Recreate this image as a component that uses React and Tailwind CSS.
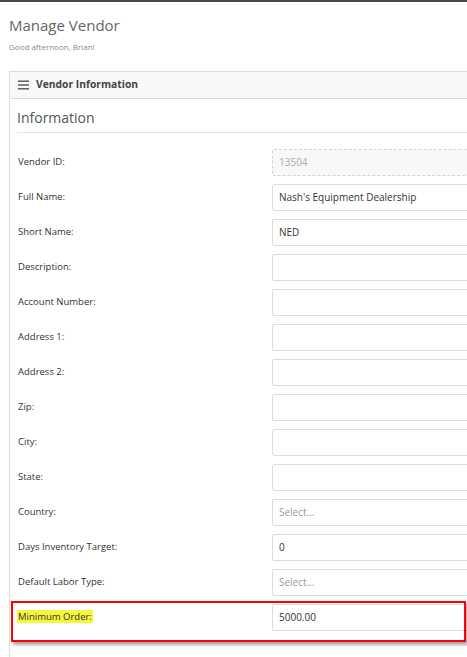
import React from "react";

const fields = [
  { label: "Vendor ID:", value: "13504", locked: true },
  { label: "Full Name:", value: "Nash's Equipment Dealership" },
  { label: "Short Name:", value: "NED" },
  { label: "Description:", value: "" },
  { label: "Account Number:", value: "" },
  { label: "Address 1:", value: "" },
  { label: "Address 2:", value: "" },
  { label: "Zip:", value: "" },
  { label: "City:", value: "" },
  { label: "State:", value: "" },
  { label: "Country:", placeholder: "Select..." },
  { label: "Days Inventory Target:", value: "0" },
  { label: "Default Labor Type:", placeholder: "Select..." },
];

const MenuIcon = () => (
  <svg width="12" height="10" viewBox="0 0 12 10" className="text-[#555]">
    <rect x="0" y="0.5" width="11" height="1.4" fill="currentColor" />
    <rect x="0" y="4.3" width="11" height="1.4" fill="currentColor" />
    <rect x="0" y="8.1" width="11" height="1.4" fill="currentColor" />
  </svg>
);

const Field = ({ value, placeholder, locked }) => {
  if (locked) {
    return (
      <div className="h-[27px] w-[220px] flex items-center px-[6px] rounded-[2px] border border-dashed border-[#d4d4d4] bg-[#f8f8f8] text-[10px] text-[#aaa]">
        {value}
      </div>
    );
  }
  return (
    <div className="h-[27px] w-[220px] flex items-center px-[6px] rounded-[2px] border border-[#dcdcdc] bg-white text-[10px] text-[#333]">
      {placeholder ? <span className="text-[#999]">{placeholder}</span> : value}
    </div>
  );
};

const Row = ({ label, children }) => (
  <div className="flex items-center h-[35px]">
    <div className="w-[254px] text-[9.5px] text-[#333]">{label}</div>
    {children}
  </div>
);

const App = () => {
  return (
    <div
      className="w-[467px] h-[657px] overflow-hidden bg-white border-t-2 border-[#4a4a4a]"
      style={{ fontFamily: '"Open Sans", "Liberation Sans", sans-serif' }}
    >
      <div className="pl-[9px] pt-[11px]">
        <h1 className="text-[15px] leading-[24px] text-[#666]">Manage Vendor</h1>
        <p className="text-[8px] leading-[12px] mt-[4px] text-[#888]">Good afternoon, Brian!</p>
      </div>

      <div className="ml-[9px] mt-[18px] w-[540px] border border-[#dcdcdc]">
        <div className="h-[27px] flex items-center gap-[6px] pl-[8px] bg-[#f8f8f8] border-b border-[#dcdcdc]">
          <MenuIcon />
          <span className="text-[10.3px] font-bold text-[#444]">Vendor Information</span>
        </div>

        <div className="px-[7px]">
          <h2 className="text-[14px] leading-[22px] text-[#555] pt-[8px] pb-[3px] border-b border-[#e3e3e3]">
            Information
          </h2>

          <div className="pt-[12px] pl-[1px]">
            {fields.map((f) => (
              <Row key={f.label} label={f.label}>
                <Field value={f.value} placeholder={f.placeholder} locked={f.locked} />
              </Row>
            ))}

            <div className="relative">
              <Row label={<span className="bg-[#f6f63a] px-[1px] -ml-[1px]">Minimum Order:</span>}>
                <Field value="5000.00" />
              </Row>
              {/* red callout box around the row */}
              <div className="absolute left-[-7px] top-[1px] w-[455px] h-[41px] border-2 border-[#f00] shadow-[2px_3px_3px_rgba(0,0,0,0.35)] pointer-events-none" />
            </div>
            <div className="h-[30px]" />
          </div>
        </div>
      </div>
    </div>
  );
};

export default App;
